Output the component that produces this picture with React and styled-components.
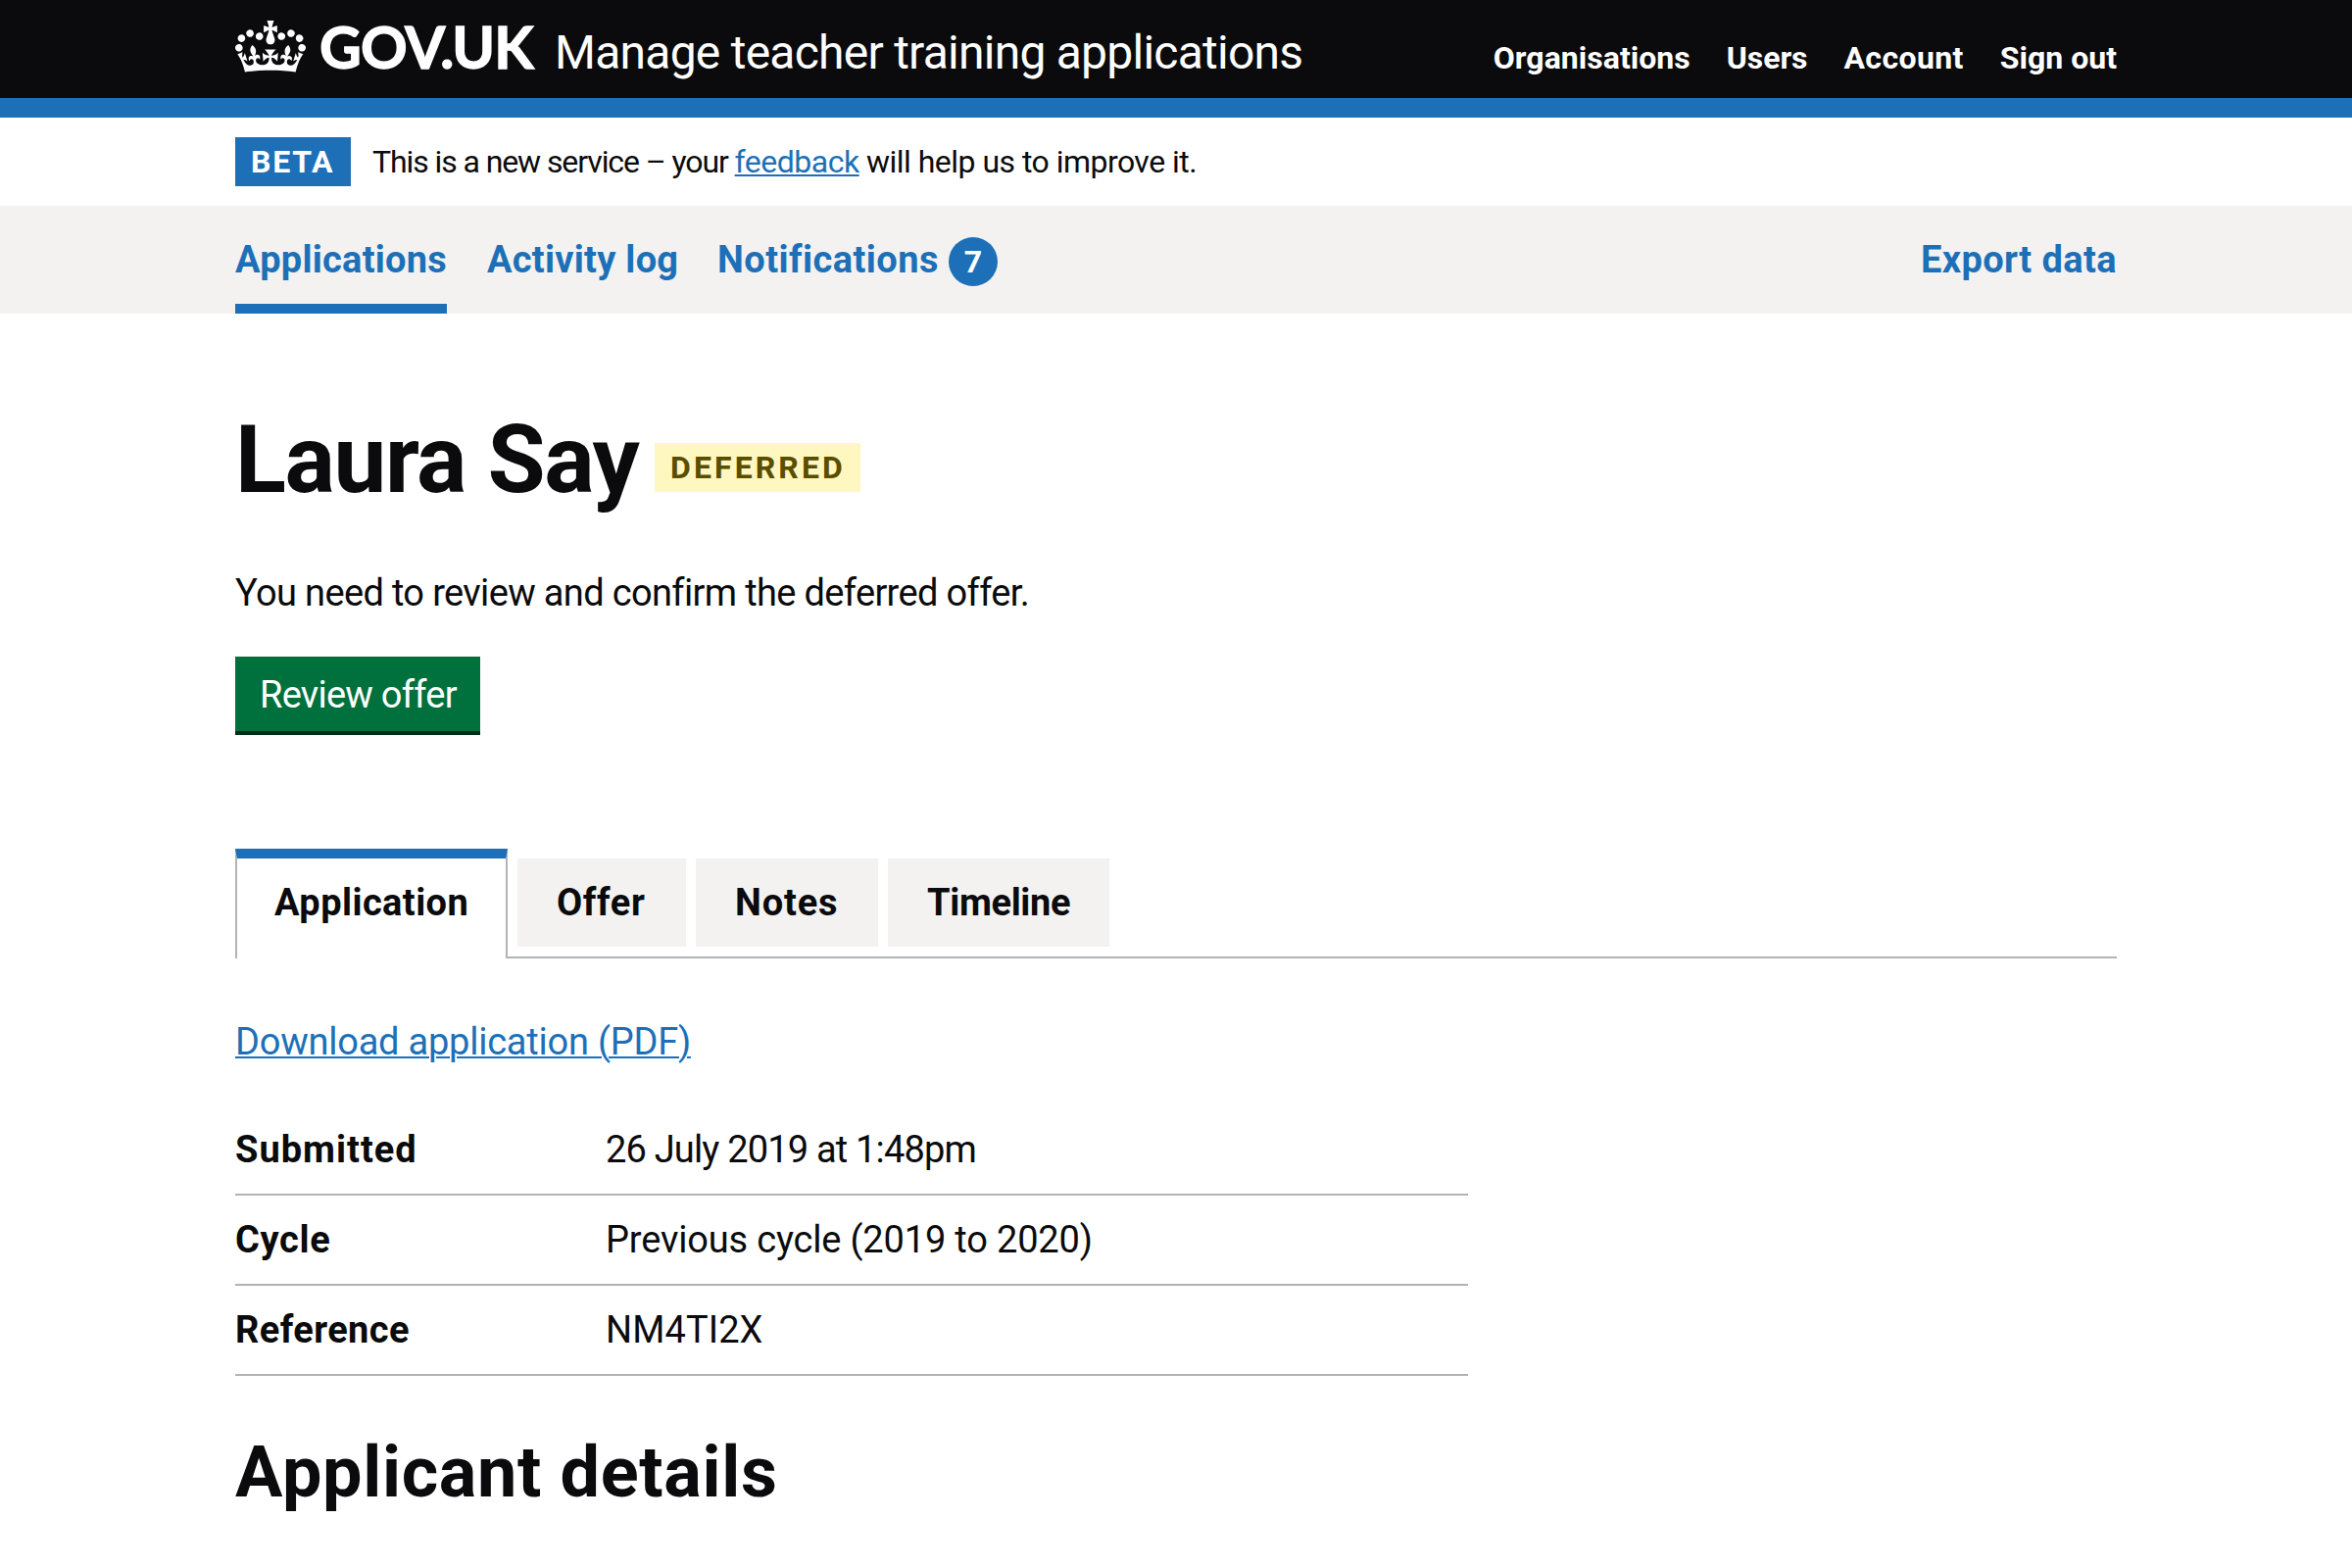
import React from "react";
import styled, { createGlobalStyle } from "styled-components";

const blue = "#1d70b8";
const ink = "#0b0b0d";
const pale = "#f3f2f1";
const line = "#b1b4b6";

const GlobalStyle = createGlobalStyle`
  *, *::before, *::after { box-sizing: border-box; }
  body {
    margin: 0;
    background: #fff;
    color: ${ink};
    font-family: Roboto, "Liberation Sans", sans-serif;
    font-size: 38px;
  }
  h1, h2, p, dl, dt, dd, ul { margin: 0; padding: 0; }
  ul { list-style: none; }
  a { color: ${blue}; }
`;

const Page = styled.div`
  height: 1600px;
  overflow: hidden;
`;

const Container = styled.div`
  width: 1920px;
  margin: 0 auto;
`;

const Text = styled.span`
  letter-spacing: ${(p) => p.$track || 0}px;
  white-space: pre;
`;

const Header = styled.header`
  height: 120px;
  background: ${ink};
  color: #fff;
  border-bottom: 20px solid ${blue};
`;

const HeaderRow = styled(Container)`
  display: flex;
  align-items: baseline;
  padding-top: 17px;
  line-height: 61px;
`;

const Crown = styled.svg`
  width: 72px;
  height: 53px;
  align-self: flex-start;
  margin: 4px 14px 0 0;
  fill: currentColor;
`;

const Logotype = styled.span`
  width: 240px;
  font-family: Lato, sans-serif;
  font-weight: 700;
  font-size: 59px;
  letter-spacing: -0.9px;
  -webkit-text-stroke: 1.3px currentColor;
`;

const ServiceName = styled.span`
  font-size: 48px;
`;

const HeaderNav = styled.nav`
  display: flex;
  gap: 37px;
  margin-left: auto;
  font-size: 32px;
  font-weight: 700;
`;

const Phase = styled(Container)`
  display: flex;
  gap: 22px;
  padding: 20px 0;
  font-size: 32px;
  line-height: 50px;
`;

const Tag = styled.strong`
  display: block;
  flex: none;
  width: ${(p) => p.$width}px;
  height: 50px;
  padding-left: 16px;
  font-size: 32px;
  line-height: 50px;
  font-weight: 700;
  color: ${(p) => (p.$tone === "yellow" ? "#594d00" : "#fff")};
  background: ${(p) => (p.$tone === "yellow" ? "#fff7bf" : blue)};
`;

const Link = styled.a`
  text-decoration: underline;
  text-decoration-thickness: 2px;
  text-underline-offset: 2px;
`;

const PrimaryNav = styled.nav`
  background: ${pale};
  color: ${blue};
  font-weight: 700;
  line-height: 110px;
`;

const NavRow = styled(Container)`
  display: flex;
  gap: 41px;
`;

const NavItem = styled.span`
  display: flex;
  align-items: center;
  height: 110px;
  width: ${(p) => (p.$width ? `${p.$width}px` : "auto")};
  margin-left: ${(p) => (p.$end ? "auto" : "0")};
  box-shadow: ${(p) => (p.$current ? `inset 0 -10px ${blue}` : "none")};
`;

const Count = styled.span`
  width: 50px;
  height: 50px;
  margin: 4px 0 0 10px;
  border-radius: 50%;
  background: ${blue};
  color: #fff;
  font-size: 32px;
  line-height: 50px;
  text-align: center;
`;

const Main = styled(Container)`
  padding-top: 99px;
`;

const TitleRow = styled.div`
  display: flex;
`;

const Title = styled.h1`
  width: 428px;
  font-size: 96px;
  line-height: 100px;
`;

const TitleTag = styled.div`
  padding-top: 33px;
`;

const Lead = styled.p`
  margin-top: 61px;
  line-height: 50px;
`;

const Button = styled.button`
  display: block;
  width: 250px;
  height: 80px;
  margin-top: 40px;
  padding: 0 0 0 25px;
  border: 0;
  border-bottom: 4px solid #002d18;
  background: #00703c;
  color: #fff;
  font: 400 38px/78px Roboto, "Liberation Sans", sans-serif;
  text-align: left;
`;

const Tabs = styled.ul`
  display: flex;
  gap: 10px;
  height: 112px;
  margin-top: 116px;
  border-bottom: 2px solid ${line};
`;

const Tab = styled.li`
  width: ${(p) => p.$width}px;
  height: ${(p) => (p.$selected ? 112 : 90)}px;
  margin-top: ${(p) => (p.$selected ? 0 : 10)}px;
  padding-left: ${(p) => (p.$selected ? 38 : 40)}px;
  border: ${(p) => (p.$selected ? `2px solid ${line}` : "0")};
  border-top: ${(p) => (p.$selected ? `10px solid ${blue}` : "0")};
  border-bottom: 0;
  background: ${(p) => (p.$selected ? "#fff" : pale)};
  font-weight: 700;
  line-height: 90px;
`;

const Download = styled.p`
  margin: 60px 0 40px;
  line-height: 50px;
`;

const Summary = styled.dl`
  width: 1258px;
`;

const SummaryRow = styled.div`
  display: grid;
  grid-template-columns: 378px 1fr;
  height: 92px;
  border-bottom: 2px solid ${line};
  line-height: 90px;
`;

const Key = styled.dt`
  font-weight: 700;
`;

const Heading = styled.h2`
  margin-top: 61px;
  font-size: 72px;
  line-height: 76px;
`;

const headerLinks = [
  ["Organisations", 0.03],
  ["Users", -0.06],
  ["Account", 0.4],
  ["Sign out", 0],
];

const tabs = [
  ["Application", 278, 0.42],
  ["Offer", 172, 0.6],
  ["Notes", 186, 0.84],
  ["Timeline", 226, -0.35],
];

const details = [
  ["Submitted", 1, "26 July 2019 at 1:48pm", -0.82],
  ["Cycle", 0.65, "Previous cycle (2019 to 2020)", -0.17],
  ["Reference", 0.41, "NM4TI2X", 0.1],
];

export default function App() {
  return (
    <Page>
      <GlobalStyle />
      <Header>
        <HeaderRow>
          <Crown viewBox="0 0 132 97" aria-hidden="true">
            <path
              fillRule="evenodd"
              d="M25 30.2c3.5 1.5 7.7-.2 9.1-3.7 1.5-3.6-.2-7.8-3.9-9.2-3.6-1.4-7.6.3-9.1 3.9-1.4 3.5.3 7.5 3.9 9zM9 39.5c3.6 1.5 7.8-.2 9.2-3.7 1.5-3.6-.2-7.8-3.9-9.1-3.6-1.5-7.6.2-9.1 3.8-1.4 3.5.3 7.5 3.8 9zM4.4 57.2c3.5 1.5 7.7-.2 9.1-3.8 1.5-3.6-.2-7.7-3.9-9.1-3.5-1.5-7.6.3-9.1 3.8-1.4 3.5.3 7.6 3.9 9.1zm38.3-21.4c3.5 1.5 7.7-.2 9.1-3.8 1.5-3.6-.2-7.7-3.9-9.1-3.6-1.5-7.6.3-9.1 3.8-1.3 3.6.4 7.7 3.9 9.1zm64.4-5.6c-3.6 1.5-7.8-.2-9.1-3.7-1.5-3.6.2-7.8 3.8-9.2 3.6-1.4 7.7.3 9.2 3.9 1.3 3.5-.4 7.5-3.9 9zm15.9 9.3c-3.6 1.5-7.7-.2-9.1-3.7-1.5-3.6.2-7.8 3.7-9.1 3.6-1.5 7.7.2 9.2 3.8 1.5 3.5-.3 7.5-3.8 9zm4.7 17.7c-3.6 1.5-7.8-.2-9.2-3.8-1.5-3.6.2-7.7 3.9-9.1 3.6-1.5 7.7.3 9.2 3.8 1.3 3.5-.4 7.6-3.9 9.1zM89.3 35.8c-3.6 1.5-7.8-.2-9.2-3.8-1.4-3.6.2-7.7 3.9-9.1 3.6-1.5 7.7.3 9.2 3.8 1.4 3.6-.3 7.7-3.9 9.1zM69.7 17.7l8.9 4.7V9.3l-8.9 2.8c-.2-.3-.5-.6-.9-.9L72.4 0H59.6l3.5 11.2c-.3.3-.6.5-.9.9l-8.8-2.8v13.1l8.8-4.7c.3.3.6.7.9.9l-5 15.4v.1c-.2.8-.4 1.6-.4 2.4 0 4.1 3.1 7.5 7 8.1h.2c.3 0 .7.1 1 .1.4 0 .7 0 1-.1h.2c4-.6 7.1-4.1 7.1-8.1 0-.8-.1-1.7-.4-2.4V34l-5.1-15.4c.4-.2.7-.6 1-.9zM66 92.8c16.9 0 32.8 1.1 47.1 3.2 4-16.9 8.9-26.7 14-33.5l-9.6-3.4c1 4.9 1.1 7.2 0 10.2-1.5-1.4-3-4.3-4.2-8.7L108.6 76c2.8-2 5-3.2 7.5-3.3-4.4 9.4-10 11.9-13.6 11.2-4.3-.8-6.3-4.6-5.6-7.9 1-4.7 5.7-5.9 8-.5 4.3-8.7-3-11.4-7.6-8.8 7.1-7.2 7.9-13.5 2.1-21.1-8 6.1-8.1 12.3-4.5 20.8-4.7-5.4-12.1-2.5-9.5 6.2 3.4-5.2 7.9-2 7.2 3.1-.6 4.3-6.4 7.8-13.5 7.2-10.3-.9-10.9-8-11.2-13.8 2.5-.5 7.1 1.8 11 7.3L80.2 60c-4.1 4.4-8 5.3-12.3 5.4 1.4-4.4 8-11.6 8-11.6H55.5s6.4 7.2 7.9 11.6c-4.2-.1-8-1-12.3-5.4l1.4 16.4c3.9-5.5 8.5-7.7 10.9-7.3-.3 5.8-.9 12.8-11.1 13.8-7.2.6-12.9-2.9-13.5-7.2-.7-5 3.8-8.3 7.1-3.1 2.7-8.7-4.6-11.6-9.4-6.2 3.7-8.5 3.6-14.7-4.6-20.8-5.8 7.6-5 13.9 2.2 21.1-4.7-2.6-11.9.1-7.7 8.8 2.3-5.5 7.1-4.2 8.1.5.7 3.3-1.3 7.1-5.7 7.9-3.5.7-9-1.8-13.5-11.2 2.5.1 4.7 1.3 7.5 3.3l-4.7-15.4c-1.2 4.4-2.7 7.2-4.3 8.7-1.1-3-.9-5.3 0-10.2l-9.5 3.4c5 6.9 9.9 16.7 14 33.5 14.8-2.1 30.8-3.2 47.7-3.2z"
            />
          </Crown>
          <Logotype>GOV.UK</Logotype>
          <ServiceName>
            <Text $track={-0.75}>Manage teacher training applications</Text>
          </ServiceName>
          <HeaderNav>
            {headerLinks.map(([label, track]) => (
              <Text key={label} $track={track}>
                {label}
              </Text>
            ))}
          </HeaderNav>
        </HeaderRow>
      </Header>

      <Phase>
        <Tag $width={118}>
          <Text $track={1.74}>BETA</Text>
        </Tag>
        <p>
          <Text $track={-1.09}>This is a new service – your </Text>
          <Link href="#">
            <Text $track={-0.5}>feedback</Text>
          </Link>
          <Text $track={-0.53}> will help us to improve it.</Text>
        </p>
      </Phase>

      <PrimaryNav>
        <NavRow>
          <NavItem $width={216} $current>
            <Text $track={0.25}>Applications</Text>
          </NavItem>
          <NavItem $width={194}>
            <Text $track={0.26}>Activity log</Text>
          </NavItem>
          <NavItem>
            <Text $track={0.44}>Notifications</Text>
            <Count>7</Count>
          </NavItem>
          <NavItem $end>
            <Text $track={0.4}>Export data</Text>
          </NavItem>
        </NavRow>
      </PrimaryNav>

      <Main as="main">
        <TitleRow>
          <Title>
            <Text $track={-1.4}>Laura Say</Text>
          </Title>
          <TitleTag>
            <Tag $width={210} $tone="yellow">
              <Text $track={3.1}>DEFERRED</Text>
            </Tag>
          </TitleTag>
        </TitleRow>
        <Lead>
          <Text $track={-0.65}>You need to review and confirm the deferred offer.</Text>
        </Lead>
        <Button>
          <Text $track={-0.75}>Review offer</Text>
        </Button>

        <Tabs>
          {tabs.map(([label, width, track], i) => (
            <Tab key={label} $width={width} $selected={i === 0}>
              <Text $track={track}>{label}</Text>
            </Tab>
          ))}
        </Tabs>

        <Download>
          <Link href="#">
            <Text $track={-0.23}>Download application (PDF)</Text>
          </Link>
        </Download>

        <Summary>
          {details.map(([key, keyTrack, value, valueTrack]) => (
            <SummaryRow key={key}>
              <Key>
                <Text $track={keyTrack}>{key}</Text>
              </Key>
              <dd>
                <Text $track={valueTrack}>{value}</Text>
              </dd>
            </SummaryRow>
          ))}
        </Summary>

        <Heading>
          <Text $track={0.66}>Applicant details</Text>
        </Heading>
      </Main>
    </Page>
  );
}
